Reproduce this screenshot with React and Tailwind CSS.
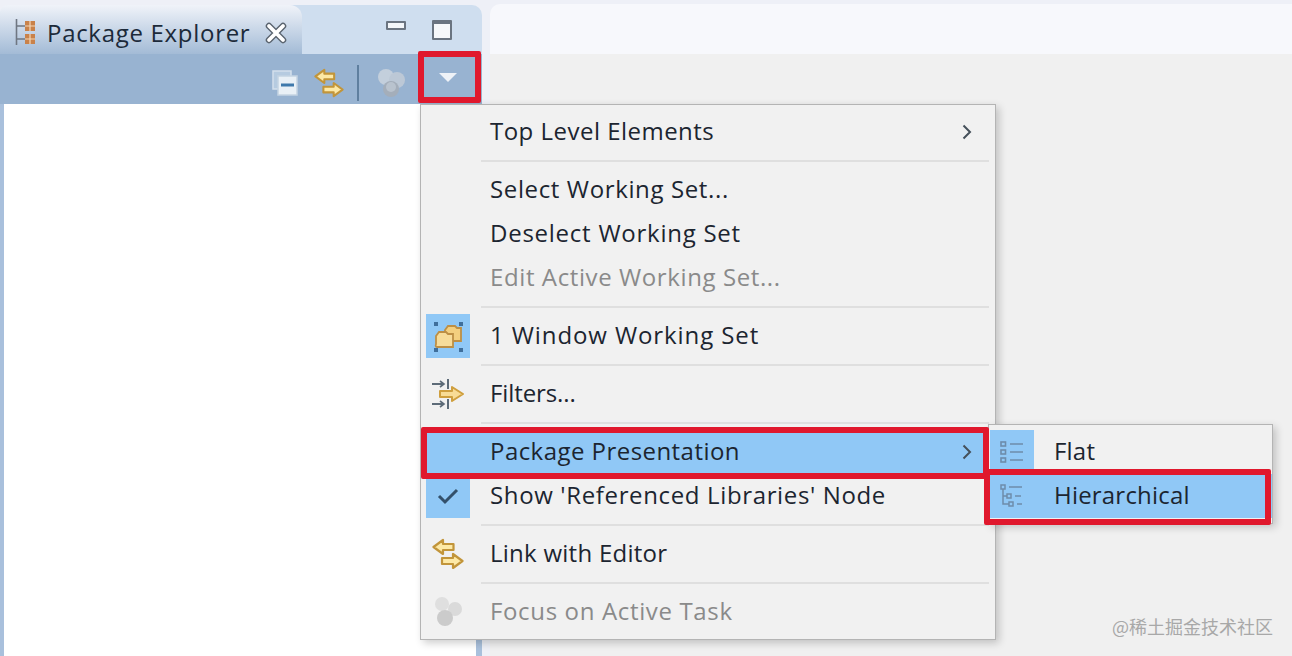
import React from "react";

const FONT = "font-['Open_Sans','Noto_Sans',sans-serif]";

// small svg icons drawn from the screenshot
const ExplorerIcon = () => (
  <svg width="22" height="30" viewBox="0 0 22 30">
    <path d="M2.5 1v26" stroke="#6f7782" strokeWidth="1.6" />
    <path d="M3 8h8M3 21h8" stroke="#6f7782" strokeWidth="1.4" />
    <rect x="11" y="3" width="10" height="10" fill="#c9824a" />
    <rect x="11" y="16" width="10" height="10" fill="#c9824a" />
    <path d="M16 3v10M11 8h10M16 16v10M11 21h10" stroke="#f3d8b8" strokeWidth="1.2" />
  </svg>
);

const CloseIcon = () => (
  <svg width="22" height="22" viewBox="0 0 22 22">
    <path d="M4 4l14 14M18 4L4 18" stroke="#59636e" strokeWidth="6.5" strokeLinecap="round" />
    <path d="M4 4l14 14M18 4L4 18" stroke="#ffffff" strokeWidth="3.8" strokeLinecap="round" />
  </svg>
);

const CollapseIcon = () => (
  <svg width="26" height="26" viewBox="0 0 26 26">
    <rect x="1" y="1" width="18" height="18" fill="#b6cbe0" stroke="#d3e0ec" strokeWidth="1.5" />
    <rect x="6" y="6" width="19" height="19" fill="#e9f0f6" stroke="#c4d4e2" strokeWidth="1.5" />
    <path d="M9 15h13" stroke="#3f79ab" strokeWidth="3" />
  </svg>
);

const LinkIcon = ({ w = 32, h = 32 }) => (
  <svg width={w} height={h} viewBox="0 0 32 32">
    <path d="M1.5 9L11 2v4h10.5v6H11v4z" fill="#fde9a6" stroke="#c2953a" strokeWidth="2.2" strokeLinejoin="round" />
    <path d="M30.5 23L21 16v4H10v6h11v4z" fill="#fde9a6" stroke="#c2953a" strokeWidth="2.2" strokeLinejoin="round" />
  </svg>
);

const FocusIcon = ({ w = 30, h = 32 }) => (
  <svg width={w} height={h} viewBox="0 0 30 32">
    <circle cx="9" cy="8" r="7" fill="#dfdfdf" />
    <circle cx="22" cy="13" r="7" fill="#dadada" />
    <circle cx="12" cy="22" r="8" fill="#cbcbcb" />
  </svg>
);

const ToolbarFocusIcon = () => (
  <svg width="28" height="30" viewBox="0 0 28 30">
    <circle cx="9" cy="9" r="8" fill="#c3cfdc" />
    <circle cx="20" cy="12" r="8" fill="#bcc8d6" />
    <circle cx="14" cy="21" r="8" fill="#a4aeba" />
    <circle cx="14" cy="19" r="5" fill="#b9c3ce" />
  </svg>
);

const WorkingSetIcon = () => (
  <svg width="36" height="36" viewBox="0 0 36 36">
    <g fill="#3f6f9c">
      <rect x="4" y="4" width="4" height="4" />
      <rect x="29" y="4" width="4" height="4" />
      <rect x="4" y="30" width="4" height="4" />
      <rect x="29" y="30" width="4" height="4" />
    </g>
    <path d="M15 12l3-4h7l2 2h4v13H15z" fill="#f3cf7f" stroke="#bd8f45" strokeWidth="1.8" />
    <path d="M6 18l3-4h7l2 2h5v13H7q-2 0-1-3z" fill="#f7dc9a" stroke="#bd8f45" strokeWidth="1.8" />
  </svg>
);

const FiltersIcon = () => (
  <svg width="34" height="32" viewBox="0 0 34 32">
    <path d="M1 6h11M1 26h11" stroke="#5d6b78" strokeWidth="1.8" />
    <path d="M9 3l4 3-4 3M9 23l4 3-4 3" fill="none" stroke="#5d6b78" strokeWidth="1.6" />
    <path d="M17 1v10M17 21v10" stroke="#5d6b78" strokeWidth="2" />
    <path d="M9 13h12V9l11 7-11 7v-4H9z" fill="#f8dc96" stroke="#cf9f3e" strokeWidth="2" strokeLinejoin="round" />
  </svg>
);

const FlatIcon = () => (
  <svg width="26" height="26" viewBox="0 0 26 26">
    <g fill="none" stroke="#6d8cab" strokeWidth="1.6">
      <rect x="2" y="3" width="4.5" height="4" />
      <rect x="2" y="11" width="4.5" height="4" />
      <rect x="2" y="19" width="4.5" height="4" />
    </g>
    <path d="M11 5h13M11 13h13M11 21h13" stroke="#6d8cab" strokeWidth="1.6" />
  </svg>
);

const HierarchyIcon = () => (
  <svg width="26" height="26" viewBox="0 0 26 26">
    <g fill="none" stroke="#6d8cab" strokeWidth="1.5">
      <rect x="2" y="2" width="4" height="4" />
      <rect x="8" y="11" width="4" height="4" />
      <rect x="10" y="19" width="4" height="4" />
      <path d="M4 6v15h6M4 13h4" />
    </g>
    <path d="M10 4h13M16 13h6M18 21h5" stroke="#6d8cab" strokeWidth="1.6" />
  </svg>
);

const Chevron = () => (
  <svg width="10" height="16" viewBox="0 0 10 16">
    <path d="M1.5 1.5L8 8l-6.5 6.5" fill="none" stroke="#45505a" strokeWidth="2" />
  </svg>
);

const Sep = () => (
  <div className="h-[14px] flex items-center justify-end pr-[6px]">
    <div className="w-[508px] h-[2px] bg-[#dfdfdf]" />
  </div>
);

const MenuRow = ({ icon, label, disabled, active, arrow, iconBg, tracking }) => (
  <div className={`h-[44px] flex items-center pl-[5px] pr-[23px] ${active ? "bg-[#90c8f6]" : ""}`}>
    <div className={`w-[44px] h-[44px] flex items-center justify-center shrink-0 ${iconBg ? "bg-[#90c8f6]" : ""}`}>
      {icon}
    </div>
    <span className={`ml-[20px] pb-[2px] flex-1 text-[24px] leading-[32px] whitespace-nowrap ${tracking} ${disabled ? "text-[#8a8a8a]" : "text-[#1c2530]"}`}>
      {label}
    </span>
    {arrow && <Chevron />}
  </div>
);

export default function App() {
  return (
    <div className={`relative w-[1292px] h-[656px] overflow-hidden flex bg-[#eef0f7] ${FONT}`}>
      {/* package explorer */}
      <div className="w-[482px] h-full pt-[5px] flex flex-col shrink-0">
        <div className="h-[49px] flex bg-[#cfdeef] rounded-t-[10px]">
          <div className="w-[302px] rounded-tr-[12px] rounded-tl-[8px] bg-gradient-to-b from-[#f0f3f9] to-[#a3bbd6] flex items-center pt-[6px] pl-[14px]">
            <ExplorerIcon />
            <span className="ml-[11px] text-[24px] text-[#1c2a3a] whitespace-nowrap tracking-[0.7px]">Package Explorer</span>
            <span className="ml-[15px] flex"><CloseIcon /></span>
          </div>
          <div className="flex-1 flex items-start pt-[15px] pl-[84px]">
            <div className="w-[20px] h-[9px] mt-[1px] bg-[#f4f6f9] border-2 border-[#6b7480] rounded-[1px]" />
            <div className="w-[20px] h-[20px] ml-[26px] bg-[#f7f8fa] border-2 border-[#6b7480] border-t-[4px] rounded-[1px]" />
          </div>
        </div>
        <div className="h-[50px] bg-[#98b3d1] flex items-center justify-end pr-[25px]">
          <span className="mt-[7px] flex"><CollapseIcon /></span>
          <span className="ml-[16px] mt-[7px] flex"><LinkIcon w={30} h={32} /></span>
          <div className="ml-[13px] mt-[7px] w-[2px] h-[36px] bg-[#5f7f9f]" />
          <span className="ml-[18px] mt-[7px] flex"><ToolbarFocusIcon /></span>
          <div className="ml-[34px] w-0 h-0 border-l-[9px] border-r-[9px] border-t-[9px] border-l-transparent border-r-transparent border-t-[#eef2f7] mb-[4px]" />
        </div>
        <div className="flex-1 flex">
          <div className="w-[4px] bg-[#a9c0dc]" />
          <div className="flex-1 bg-white" />
          <div className="w-[6px] bg-[#a9c0dc]" />
        </div>
      </div>

      {/* editor area */}
      <div className="flex-1 ml-[8px] pt-[4px] flex flex-col">
        <div className="h-[50px] bg-[#f7f8fc] rounded-tl-[10px]" />
        <div className="flex-1 bg-[#f0f0f0]" />
      </div>

      {/* view menu */}
      <div className="absolute left-[420px] top-[104px] w-[576px] h-[536px] pt-[5px] bg-[#f1f1f1] border border-[#b4b4b4] shadow-[3px_3px_8px_rgba(0,0,0,0.2)]">
        <MenuRow label="Top Level Elements" arrow tracking="tracking-[0.48px]" />
        <Sep />
        <MenuRow label="Select Working Set..." tracking="tracking-[0.63px]" />
        <MenuRow label="Deselect Working Set" tracking="tracking-[0.75px]" />
        <MenuRow label="Edit Active Working Set..." disabled tracking="tracking-[0.6px]" />
        <Sep />
        <MenuRow label="1 Window Working Set" iconBg icon={<WorkingSetIcon />} tracking="tracking-[0.9px]" />
        <Sep />
        <MenuRow label="Filters..." icon={<FiltersIcon />} tracking="tracking-[-0.1px]" />
        <Sep />
        <MenuRow label="Package Presentation" active arrow tracking="tracking-[0.45px]" />
        <MenuRow
          label="Show 'Referenced Libraries' Node"
          iconBg
          tracking="tracking-[0.64px]"
          icon={
            <svg width="22" height="18" viewBox="0 0 22 18">
              <path d="M2 9l6 6L20 3" fill="none" stroke="#33506b" strokeWidth="3" />
            </svg>
          }
        />
        <Sep />
        <MenuRow label="Link with Editor" icon={<LinkIcon />} tracking="tracking-[0.26px]" />
        <Sep />
        <MenuRow label="Focus on Active Task" disabled icon={<FocusIcon />} tracking="tracking-[0.65px]" />
      </div>

      {/* submenu */}
      <div className="absolute left-[988px] top-[424px] w-[285px] h-[100px] pt-[5px] bg-[#f1f1f1] border border-[#b4b4b4] shadow-[3px_3px_8px_rgba(0,0,0,0.2)]">
        <div className="h-[44px] flex items-center">
          <div className="ml-[1px] w-[44px] h-[44px] bg-[#90c8f6] flex items-center justify-center"><FlatIcon /></div>
          <span className="ml-[20px] pb-[2px] text-[24px] text-[#1c2530] tracking-[0.2px]">Flat</span>
        </div>
        <div className="h-[44px] flex items-center bg-[#90c8f6]">
          <div className="ml-[1px] w-[44px] flex items-center justify-center"><HierarchyIcon /></div>
          <span className="ml-[20px] pb-[2px] text-[24px] text-[#1c2530] tracking-[0.2px]">Hierarchical</span>
        </div>
      </div>

      {/* red annotation boxes */}
      <div className="absolute left-[418px] top-[51px] w-[63px] h-[52px] border-[6px] border-[#e0182d] rounded-[2px]" />
      <div className="absolute left-[421px] top-[427px] w-[568px] h-[52px] border-[6px] border-[#e0182d] rounded-[2px]" />
      <div className="absolute left-[984px] top-[469px] w-[287px] h-[56px] border-[6px] border-[#e0182d] rounded-[2px]" />

      {/* watermark */}
      <span className="absolute left-[1112px] top-[614px] text-[18px] leading-[24px] text-[#a8a8a8] whitespace-nowrap font-['Noto_Sans_CJK_SC',sans-serif]">@稀土掘金技术社区</span>
    </div>
  );
}
